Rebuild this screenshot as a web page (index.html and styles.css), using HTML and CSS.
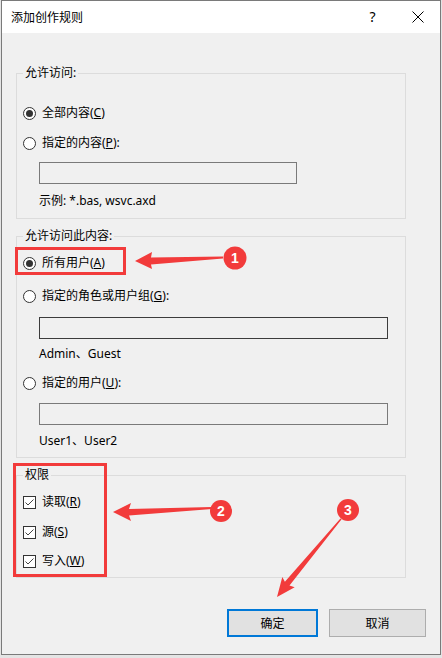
FILE: index.html
```html
<!DOCTYPE html>
<html lang="zh-CN">

<head>
  <meta charset="UTF-8">
  <meta name="viewport" content="width=device-width, initial-scale=1.0">
  <title>添加创作规则</title>
  <link rel="stylesheet" href="styles.css">
</head>

<body>
  <div class="window">
    <div class="titlebar">
      <span class="title">添加创作规则</span>
      <span class="caption-btn">?</span>
      <span class="caption-btn">
        <svg width="12" height="12" viewBox="0 0 12 12">
          <path d="M0.5 0.5 L11.5 11.5 M11.5 0.5 L0.5 11.5" stroke="#000" stroke-width="1" fill="none" />
        </svg>
      </span>
    </div>

    <div class="client">
      <fieldset class="group">
        <legend>允许访问:</legend>
        <div class="group-body body-access">
          <label class="option"><span class="radio checked"></span><span>全部内容(<u>C</u>)</span></label>
          <label class="option option-next"><span class="radio"></span><span>指定的内容(<u>P</u>):</span></label>
          <div class="field field-short"></div>
          <div class="hint">示例: *.bas, wsvc.axd</div>
        </div>
      </fieldset>

      <fieldset class="group">
        <legend>允许访问此内容:</legend>
        <div class="group-body body-users">
          <label class="option"><span class="radio checked"></span><span>所有用户(<u>A</u>)</span></label>
          <label class="option option-wide"><span class="radio"></span><span>指定的角色或用户组(<u>G</u>):</span></label>
          <div class="field field-dark"></div>
          <div class="hint">Admin、Guest</div>
          <label class="option option-wide"><span class="radio"></span><span>指定的用户(<u>U</u>):</span></label>
          <div class="field field-users"></div>
          <div class="hint hint-users">User1、User2</div>
        </div>
      </fieldset>

      <fieldset class="group">
        <legend>权限</legend>
        <div class="group-body body-perms">
          <label class="option">
            <span class="check"><svg width="11" height="11" viewBox="0 0 11 11"><path d="M1.5 5.5 L4 8 L9.5 2.5" stroke="#444" stroke-width="1" fill="none" /></svg></span>
            <span>读取(<u>R</u>)</span>
          </label>
          <label class="option option-next">
            <span class="check"><svg width="11" height="11" viewBox="0 0 11 11"><path d="M1.5 5.5 L4 8 L9.5 2.5" stroke="#444" stroke-width="1" fill="none" /></svg></span>
            <span>源(<u>S</u>)</span>
          </label>
          <label class="option option-last">
            <span class="check"><svg width="11" height="11" viewBox="0 0 11 11"><path d="M1.5 5.5 L4 8 L9.5 2.5" stroke="#444" stroke-width="1" fill="none" /></svg></span>
            <span>写入(<u>W</u>)</span>
          </label>
        </div>
      </fieldset>

      <div class="buttons">
        <button class="btn btn-default">确定</button>
        <button class="btn btn-cancel">取消</button>
      </div>
    </div>
  </div>

  <!-- screenshot annotations -->
  <svg class="marks" width="442" height="658" viewBox="0 0 442 658">
    <rect x="16.5" y="248.5" width="108" height="25" fill="none" stroke="#f23b3b" stroke-width="3" />
    <rect x="14.5" y="464.5" width="91" height="111" fill="none" stroke="#f23b3b" stroke-width="3" />

    <polygon points="135,261 152,252 151,257.5 223,256.5 223,258.5 151,264.5 152,269" fill="#f23b3b" />
    <polygon points="113,512 131,503 129,509 212,507 212,509 129,515.5 131,521" fill="#f23b3b" />
    <polygon points="277,597 294.7,587.2 289.5,585.6 341.6,519.3 340.4,518.5 284.9,581.8 282.3,577" fill="#f23b3b" />

    <circle cx="235" cy="258" r="11.5" fill="#f23b3b" />
    <circle cx="221" cy="511" r="11" fill="#f23b3b" />
    <circle cx="348" cy="510" r="11" fill="#f23b3b" />
    <text class="mark-num" x="235" y="263">1</text>
    <text class="mark-num" x="221" y="516">2</text>
    <text class="mark-num" x="348" y="515">3</text>
  </svg>
</body>

</html>
```

FILE: styles.css
```css
body {
  margin: 0;
  width: 442px;
  height: 658px;
  position: relative;
  background: #e4e4e4;
  font-family: "Noto Sans", "Noto Sans CJK SC", sans-serif;
  font-size: 12px;
  line-height: 16px;
  color: #000;
}

.window {
  width: 440px;
  margin-left: 1px;
  box-sizing: border-box;
  border: 1px solid #7a7a7a;
  background: #f0f0f0;
}

.titlebar {
  height: 32px;
  display: flex;
  align-items: center;
  background: #fff;
}

.title {
  flex: 1;
  padding-left: 9px;
  padding-top: 1px;
}

.caption-btn {
  width: 45px;
  height: 32px;
  display: flex;
  align-items: center;
  justify-content: center;
  font-size: 14px;
}

.client {
  padding: 32px 0 17px 14px;
}

.group {
  width: 390px;
  box-sizing: border-box;
  margin: 9px 0 0 0;
  padding: 0;
  border: 1px solid #dcdcdc;
  min-width: 0;
}

.group:first-child {
  margin-top: 0;
}

.group legend {
  margin-left: 6px;
  padding: 0 2px;
  line-height: 16px;
}

.group-body {
  display: flex;
  flex-direction: column;
  align-items: flex-start;
  padding-left: 6px;
}

.body-access {
  padding-top: 24px;
  padding-bottom: 9px;
}

.body-users {
  padding-top: 11px;
  padding-bottom: 8px;
}

.body-perms {
  padding-top: 11px;
  padding-bottom: 8px;
}

.option {
  height: 16px;
  display: flex;
  align-items: center;
  gap: 6px;
  white-space: nowrap;
}

.option-next {
  margin-top: 14px;
}

.option-wide {
  margin-top: 13px;
}

.body-users .option-wide:nth-child(2) {
  margin-top: 17px;
}

.option-last {
  margin-top: 13px;
}

.radio {
  width: 13px;
  height: 13px;
  box-sizing: border-box;
  border: 1px solid #333;
  border-radius: 50%;
  background: #fff;
  display: flex;
  align-items: center;
  justify-content: center;
}

.radio.checked::after {
  content: "";
  width: 7px;
  height: 7px;
  border-radius: 50%;
  background: #333;
}

.check {
  width: 13px;
  height: 13px;
  box-sizing: border-box;
  border: 1px solid #333;
  background: #fff;
  display: flex;
}

.field {
  width: 349px;
  height: 22px;
  box-sizing: border-box;
  margin: 12px 0 0 16px;
  border: 1px solid #7a7a7a;
  background: #f0f0f0;
}

.field-short {
  width: 258px;
  margin-top: 11px;
}

.field-dark {
  margin-top: 13px;
  border-color: #3c3c3c;
}

.hint {
  margin: 7px 0 0 16px;
}

.body-access .hint {
  margin-top: 9px;
}

.hint-users {
  margin-top: 8px;
}

.buttons {
  display: flex;
  justify-content: flex-end;
  gap: 11px;
  margin: 31px 14px 0 0;
}

.btn {
  height: 28px;
  box-sizing: border-box;
  padding: 0;
  font-family: inherit;
  font-size: 12px;
  color: #000;
  background: #e1e1e1;
  border: 1px solid #adadad;
}

.btn-default {
  width: 91px;
  border: 2px solid #0078d7;
}

.btn-cancel {
  width: 97px;
}

.marks {
  position: absolute;
  left: 0;
  top: 0;
  pointer-events: none;
}

.mark-num {
  fill: #fff;
  font-family: "Liberation Sans", sans-serif;
  font-size: 14px;
  font-weight: bold;
  text-anchor: middle;
}
```
